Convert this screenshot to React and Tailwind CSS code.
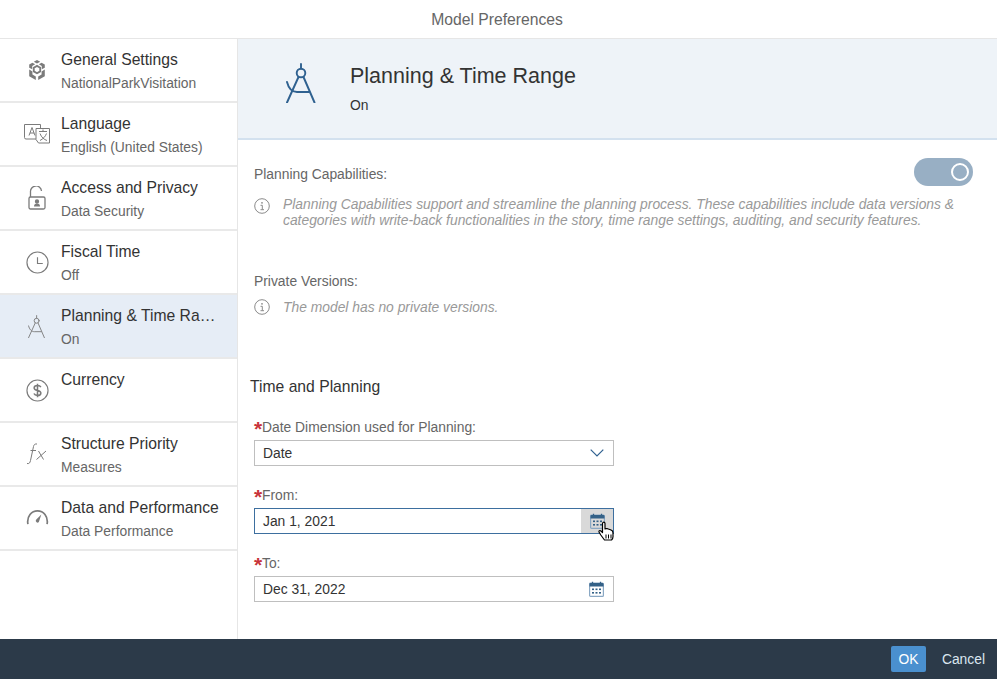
import React from "react";

function Compass({ size = 24, sw = 1.2 }) {
  return (
    <svg width={size * 0.75} height={size} viewBox="0 0 30 40" fill="none" stroke="currentColor" strokeWidth={sw * 1.6} strokeLinecap="round">
      <path d="M15 1v4.500" />
      <circle cx="15" cy="10" r="4.300" />
      <path d="M12.500 14L1 39.500M17.500 14L28.500 39.500" />
      <path d="M1 19c1.500 6 5 10 10 10h12" />
    </svg>
  );
}

const icons = {
  box: (
    <svg width="22" height="24" viewBox="0 0 24 24" fill="#7b7b7b">
      <path d="M12 1l3.500 2-3.500 2-3.500-2zM7 4l3 1.700-3.200 1.900v3.700L3.500 9.500V6zM17 4l3.500 2v3.500l-3.300 1.800V7.600L14 5.700z" />
      <path d="M12 7.500l3.500 2v4L12 15.500l-3.500-2v-4z" fill="none" stroke="#7b7b7b" strokeWidth="2" />
      <path d="M3.500 11.500l3.500 2v3.300l3.700 2.200V23l-7.200-4.200zM20.500 11.500v7.300L13.300 23v-4l3.700-2.200v-3.300z" />
    </svg>
  ),
  lang: (
    <svg width="28" height="22" viewBox="0 0 28 22" fill="none" stroke="#7b7b7b" strokeWidth="1">
      <path d="M1.500 1.500h16v14.500H3a1.500 1.500 0 0 1-1.500-1.500z" />
      <path d="M13 5.500h13.500v14.500H15.500l-2.500-3.500z" fill="#fff" />
      <path d="M6 12.500L9 4.500l3 8M7 10h4" />
      <path d="M16 8.500h8M20 6.500v2M17 10.500c1.500 4 4 6 7 7M23.500 10.500c-1 3-3.500 5.500-6.500 7" />
    </svg>
  ),
  lock: (
    <svg width="18" height="24" viewBox="0 0 18 24" fill="none" stroke="#7b7b7b" strokeWidth="1.300">
      <path d="M2.500 11V6a5.500 5.500 0 0 1 11-1" />
      <rect x="1" y="11" width="16" height="12" rx="1.500" />
      <circle cx="9" cy="15.500" r="1.500" fill="#7b7b7b" />
      <path d="M6 20.500c0-2 1-3 3-3s3 1 3 3z" fill="#7b7b7b" stroke="none" />
    </svg>
  ),
  clock: (
    <svg width="23" height="23" viewBox="0 0 24 24" fill="none" stroke="#7b7b7b" strokeWidth="1.200">
      <circle cx="12" cy="12" r="11" />
      <path d="M12 6.500V13h5.500" />
    </svg>
  ),
  dollar: (
    <svg width="23" height="23" viewBox="0 0 24 24" fill="none" stroke="#7b7b7b" strokeWidth="1.200">
      <circle cx="12" cy="12" r="11" />
      <path d="M15.500 8.500c-.5-1-1.700-1.700-3.500-1.700-2 0-3.500 1-3.500 2.500 0 3.500 7 1.800 7 5.200 0 1.600-1.500 2.700-3.500 2.700-1.900 0-3.200-.8-3.700-2M12 5v14" strokeWidth="1.600" />
    </svg>
  ),
  fx: (
    <svg width="22" height="22" viewBox="0 0 22 22" fill="none" stroke="#7b7b7b" strokeWidth="1">
      <path d="M11 1C9 .7 8 1.500 7.500 3.500L4.500 17.500C4 20 3 21 1 20.500M4.500 7.500h5.500" />
      <path d="M12.500 8l5 8.500M20 8l-9.500 8.500" />
    </svg>
  ),
  gauge: (
    <svg width="23" height="16" viewBox="0 0 24 16" fill="none" stroke="#7b7b7b" strokeWidth="1.800">
      <path d="M2 15.500C.5 7 6 1.500 12 1.500s11.500 5.500 10 14" />
      <path d="M10.500 11L16 5.500l-2.500 7.500a1.600 1.600 0 0 1-3-2z" fill="#7b7b7b" stroke="none" />
    </svg>
  ),
};

const items = [
  { t: "General Settings", s: "NationalParkVisitation", i: icons.box },
  { t: "Language", s: "English (United States)", i: icons.lang },
  { t: "Access and Privacy", s: "Data Security", i: icons.lock },
  { t: "Fiscal Time", s: "Off", i: icons.clock },
  { t: "Planning & Time Range", s: "On", i: <span className="text-[#7b7b7b]"><Compass size={23} sw={1.000} /></span>, active: true },
  { t: "Currency", s: "", i: icons.dollar },
  { t: "Structure Priority", s: "Measures", i: icons.fx },
  { t: "Data and Performance", s: "Data Performance", i: icons.gauge, up: true },
];

function Info() {
  return (
    <svg width="16" height="16" viewBox="0 0 16 16" fill="none" stroke="#8a8a8a" strokeWidth="1" className="shrink-0">
      <circle cx="8" cy="8" r="7.300" />
      <circle cx="8" cy="4.800" r=".9" fill="#8a8a8a" stroke="none" />
      <path d="M6.500 7.300H8.300v4.200M6.500 11.700h3.500" />
    </svg>
  );
}

function Calendar() {
  return (
    <svg width="15" height="16" viewBox="0 0 15 16" fill="none">
      <rect x=".6" y="2" width="13.800" height="13.400" rx="1" stroke="#8aa8c4" strokeWidth="1.200" />
      <path d="M.5 3a1 1 0 0 1 1-1h12a1 1 0 0 1 1 1v2.500H.5z" fill="#346187" />
      <path d="M3.500 .8v2M11.500 .8v2" stroke="#346187" strokeWidth="1.300" />
      <g fill="#346187">
        <rect x="3" y="7.500" width="2" height="1.600" />
        <rect x="6.500" y="7.500" width="2" height="1.600" />
        <rect x="10" y="7.500" width="2" height="1.600" />
        <rect x="3" y="11" width="2" height="1.600" />
        <rect x="6.500" y="11" width="2" height="1.600" />
        <rect x="10" y="11" width="2" height="1.600" />
      </g>
    </svg>
  );
}

function Hand() {
  return (
    <svg width="17" height="21" viewBox="0 0 17 21" className="absolute left-[17px] top-[12px] z-10">
      <path d="M5 1.500c1-.7 2 0 2 1V8l1-.3 1.500 0 1.500.5 1.500.5 1.700 1c.6.800.8 1.800.8 3v3c0 1.500-.6 2.500-1.500 3.300H6.500L2.800 14 1 11c-.3-1 .7-1.700 1.600-1.200L4.500 11.500V2.500c0-.4.200-.8.500-1z" fill="#fff" stroke="#000" strokeWidth="1.200" strokeLinejoin="round" />
      <path d="M8 13.500v4M10.500 13.500v4M13 13.500v4" stroke="#000" strokeWidth="1" />
    </svg>
  );
}

function Label({ children }) {
  return (
    <div className="h-[18px] leading-[18px] text-[13.85px] text-[#666] flex">
      <span className="text-[#c8343a] font-bold text-[21px] leading-[22px] w-[8px]">*</span>
      <span>{children}</span>
    </div>
  );
}

export default function App() {
  return (
    <div className="w-[997px] h-[679px] flex flex-col bg-white overflow-hidden" style={{ fontFamily: '"Liberation Sans", Arial, sans-serif' }}>
      <header className="h-[39px] shrink-0 flex items-center justify-center border-b border-[#e6e6e6] pt-[1px] pr-[3px] text-[15.7px] text-[#666]">
        Model Preferences
      </header>
      <div className="flex-1 flex min-h-0">
        <nav className="w-[238px] shrink-0 border-r border-[#e6e6e6]">
          {items.map((it) => (
            <div key={it.t} className={`h-[64px] flex border-b-2 border-[#e9e9e9] ${it.active ? "bg-[#e6edf6]" : "bg-white"}`}>
              <div className={`w-[74px] -mr-[13px] shrink-0 flex items-center justify-center ${it.up ? "pb-[3px]" : ""}`}>{it.i}</div>
              <div className="min-w-0 flex-1 pt-[10px] pr-[14px]">
                <div className="text-[15.7px] leading-[22px] text-[#333] truncate">{it.t}</div>
                <div className="text-[13.85px] leading-[20px] mt-[2px] text-[#666] truncate">{it.s}</div>
              </div>
            </div>
          ))}
        </nav>
        <main className="flex-1 min-w-0">
          <section className="h-[101px] bg-[#eef3f8] border-b-2 border-[#d3e1ef] flex">
            <div className="w-[112px] shrink-0 flex justify-center pt-[24px] text-[#2f6190]">
              <div className="pl-[14px]"><Compass size={40} sw={1.200} /></div>
            </div>
            <div className="pt-[22px]">
              <div className="text-[21.5px] leading-[30px] text-[#333]">Planning &amp; Time Range</div>
              <div className="text-[13.85px] leading-[20px] mt-[4px] text-[#333]">On</div>
            </div>
          </section>
          <div className="pl-[16px] pr-[24px]">
            <div className="pt-[24px] flex justify-between">
              <span className="text-[13.85px] leading-[20px] text-[#666]">Planning Capabilities:</span>
              <span className="w-[59px] h-[28px] rounded-full bg-[#98afc4] flex items-center justify-end pr-[4px] -mt-[6px]">
                <span className="w-[18px] h-[18px] rounded-full border-2 border-white" />
              </span>
            </div>
            <div className="flex gap-[13px] mt-[10px]">
              <div className="pt-[2px]"><Info /></div>
              <p className="text-[13.85px] leading-[16px] italic text-[#999]">
                Planning Capabilities support and streamline the planning process. These capabilities include data versions &amp; categories with write-back functionalities in the story, time range settings, auditing, and security features.
              </p>
            </div>
            <div className="text-[13.85px] leading-[20px] text-[#666] mt-[43px]">Private Versions:</div>
            <div className="flex gap-[13px] mt-[6px]">
              <div className="pt-[2px]"><Info /></div>
              <p className="text-[13.85px] leading-[20px] italic text-[#999]">The model has no private versions.</p>
            </div>
            <h2 className="text-[15.7px] leading-[22px] text-[#333] mt-[59px] -ml-[4px]">Time and Planning</h2>
            <div className="w-[360px] mt-[20px]">
              <Label>Date Dimension used for Planning:</Label>
              <div className="h-[26px] mt-[4px] border border-[#bfbfbf] flex items-center justify-between pl-[8px] pr-[9px] text-[13.85px] text-[#333]">
                Date
                <svg width="14" height="8" viewBox="0 0 14 8" fill="none" stroke="#2f6190" strokeWidth="1.200"><path d="M.7.7L7 7l6.300-6.300" /></svg>
              </div>
              <div className="mt-[20px]"><Label>From:</Label></div>
              <div className="h-[26px] mt-[4px] border border-[#3d6f9f] flex items-center justify-between pl-[8px] text-[13.85px] text-[#333]">
                Jan 1, 2021
                <div className="relative w-[32px] h-full bg-[#d9d9d9] flex items-center justify-center">
                  <Calendar />
                  <Hand />
                </div>
              </div>
              <div className="mt-[20px]"><Label>To:</Label></div>
              <div className="h-[26px] mt-[4px] border border-[#bfbfbf] flex items-center justify-between pl-[8px] pr-[9px] text-[13.85px] text-[#333]">
                Dec 31, 2022
                <Calendar />
              </div>
            </div>
          </div>
        </main>
      </div>
      <footer className="h-[40px] shrink-0 bg-[#2c3a49] flex items-center justify-end pr-[12px] gap-[16px] text-[13.85px]">
        <button className="w-[35px] h-[26px] rounded-[2px] bg-[#4a90cf] text-white">OK</button>
        <button className="text-[#dbe6f0]">Cancel</button>
      </footer>
    </div>
  );
}
